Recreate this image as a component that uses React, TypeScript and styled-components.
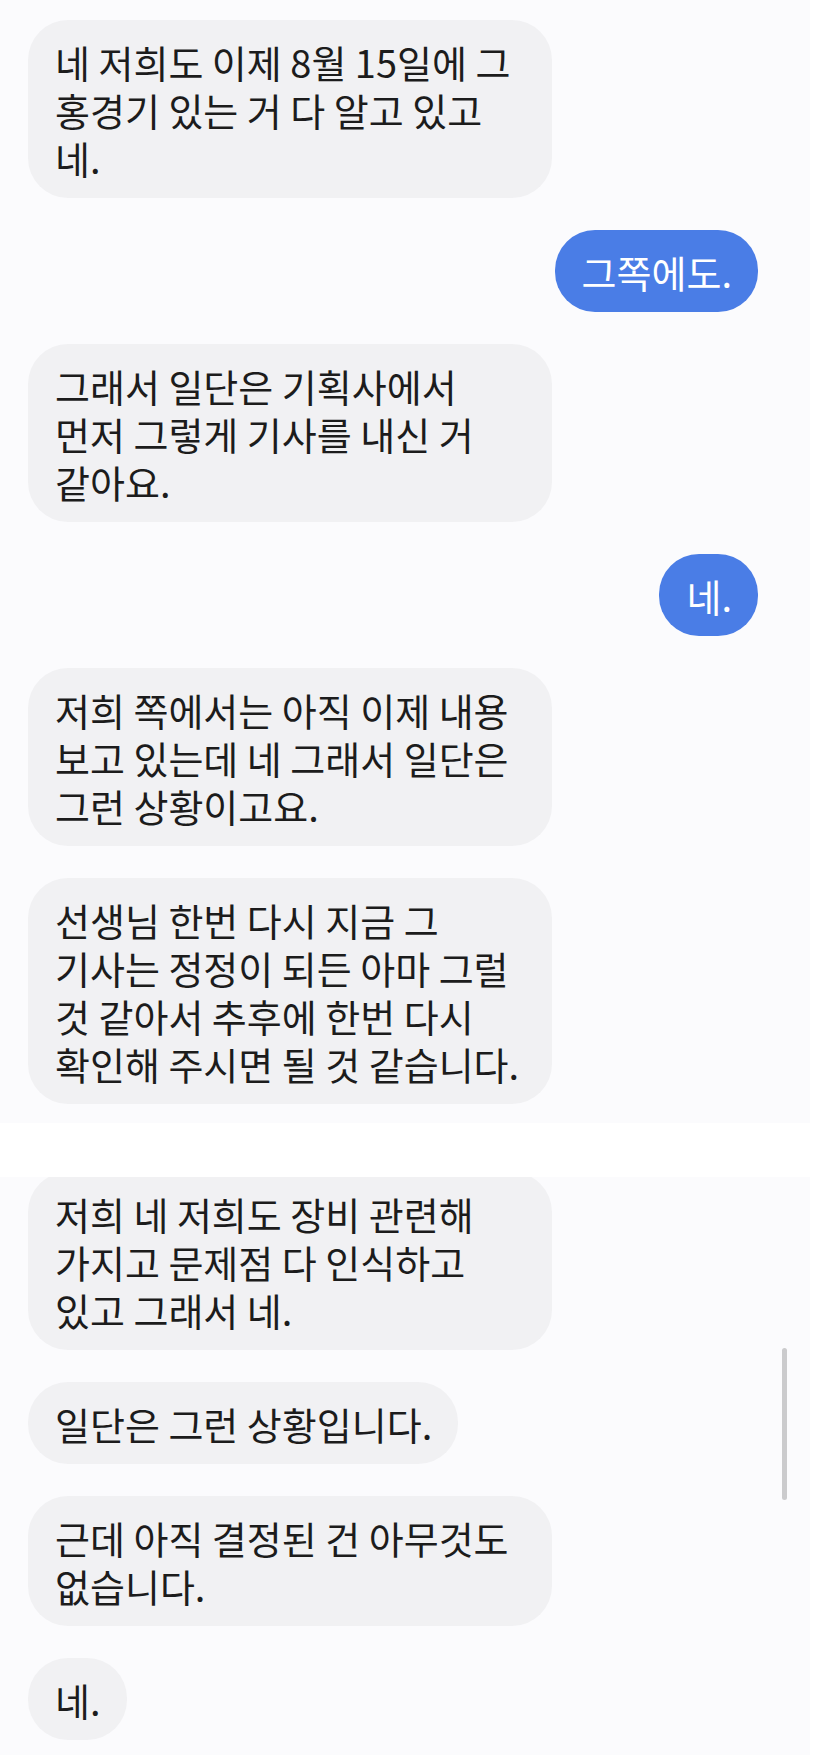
import styled, { createGlobalStyle } from 'styled-components'

const GlobalStyle = createGlobalStyle`
  html, body {
    margin: 0;
    padding: 0;
    background: #ffffff;
  }
  body {
    font-family: "Noto Sans CJK KR", "Noto Sans", sans-serif;
    -webkit-font-smoothing: antialiased;
  }
`

const Page = styled.div`
  width: 829px;
  height: 1755px;
  overflow: hidden;
  display: flex;
  flex-direction: column;
  background: #ffffff;
`

interface ShotProps {
  $height: number;
  $gapTop?: number;
}

// each stitched screenshot of the chat
const Shot = styled.section<ShotProps>`
  position: relative;
  width: 810px;
  height: ${(p) => p.$height}px;
  margin-top: ${(p) => p.$gapTop || 0}px;
  overflow: hidden;
  background: #fbfbfd;
  display: flex;
  flex-direction: column;
  gap: 32px;
  box-sizing: border-box;
`

interface RowProps {
  $mine?: boolean;
  $shift?: number;
}

const Row = styled.div<RowProps>`
  display: flex;
  justify-content: ${(p) => (p.$mine ? 'flex-end' : 'flex-start')};
  padding: 0 52px 0 28px;
  margin-top: ${(p) => p.$shift || 0}px;
`

interface BubbleProps {
  $mine?: boolean;
  $wide?: boolean;
}

const Bubble = styled.div<BubbleProps>`
  box-sizing: border-box;
  width: ${(p) => (p.$wide ? '524px' : 'auto')};
  padding: 18px 26px 16px 27px;
  border-radius: 40px;
  background: ${(p) => (p.$mine ? '#4a7de6' : '#f1f1f3')};
  color: ${(p) => (p.$mine ? '#ffffff' : '#1c1c1c')};
  font-size: 38px;
  font-weight: 400;
  line-height: 48px;
  white-space: pre-line;
`

const ScrollThumb = styled.div`
  position: absolute;
  left: 782px;
  top: 171px;
  width: 5px;
  height: 152px;
  border-radius: 3px;
  background: #cbcbcd;
`

type Msg = { text: string; mine?: boolean }

const first: Msg[] = [
  { text: '네 저희도 이제 8월 15일에 그\n홍경기 있는 거 다 알고 있고\n네.' },
  { text: '그쪽에도.', mine: true },
  { text: '그래서 일단은 기획사에서\n먼저 그렇게 기사를 내신 거\n같아요.' },
  { text: '네.', mine: true },
  { text: '저희 쪽에서는 아직 이제 내용\n보고 있는데 네 그래서 일단은\n그런 상황이고요.' },
  { text: '선생님 한번 다시 지금 그\n기사는 정정이 되든 아마 그럴\n것 같아서 추후에 한번 다시\n확인해 주시면 될 것 같습니다.' },
]

const second: Msg[] = [
  { text: '저희 네 저희도 장비 관련해\n가지고 문제점 다 인식하고\n있고 그래서 네.' },
  { text: '일단은 그런 상황입니다.' },
  { text: '근데 아직 결정된 건 아무것도\n없습니다.' },
  { text: '네.' },
]

function Message({ msg, shift }: { msg: Msg; shift?: number }) {
  return (
    <Row $mine={msg.mine} $shift={shift}>
      <Bubble $mine={msg.mine} $wide={msg.text.includes('\n')}>
        {msg.text}
      </Bubble>
    </Row>
  )
}

export default function App() {
  return (
    <>
      <GlobalStyle />
      <Page>
        <Shot $height={1123}>
          {first.map((m, i) => (
            <Message key={i} msg={m} shift={i === 0 ? 20 : 0} />
          ))}
        </Shot>
        <Shot $height={578} $gapTop={54}>
          {second.map((m, i) => (
            <Message key={i} msg={m} shift={i === 0 ? -5 : 0} />
          ))}
          <ScrollThumb />
        </Shot>
      </Page>
    </>
  )
}
